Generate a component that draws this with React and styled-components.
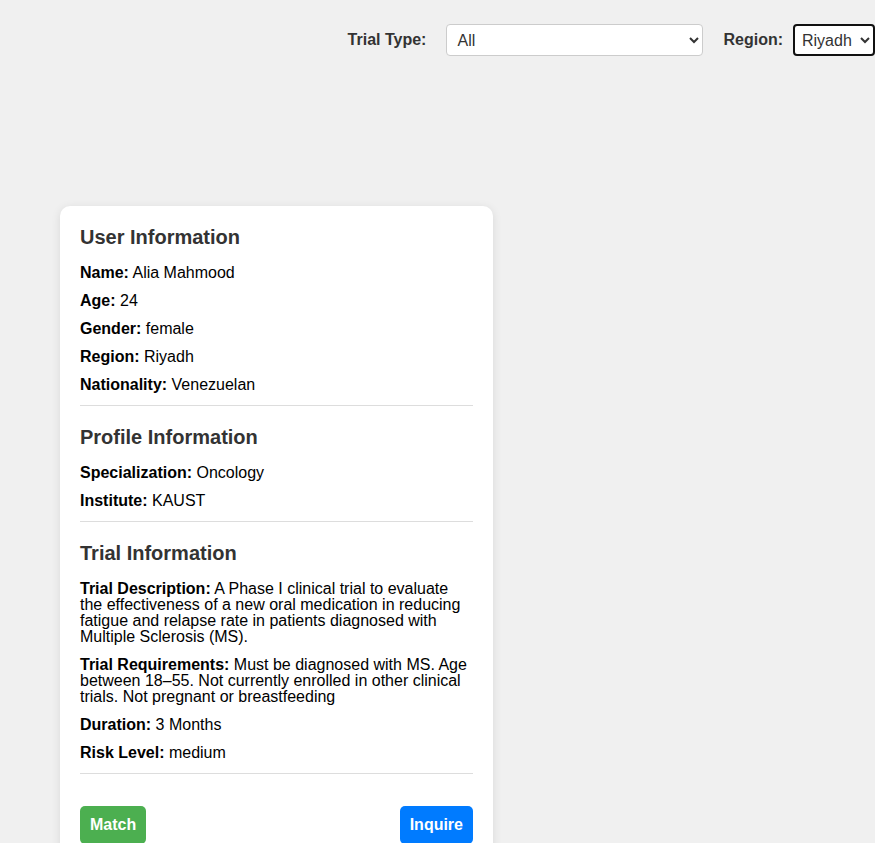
import React from 'react';
import styled, { createGlobalStyle } from 'styled-components';

const GlobalStyle = createGlobalStyle`
    html, body {
        margin: 0;
        padding: 0;
        background-color: #f0f0f0;
        font-family: "Liberation Sans", Arial, sans-serif;
    }
`;

const Page = styled.div`
    min-height: 843px;
    box-sizing: border-box;
    padding-top: 24px;
    overflow: hidden;
`;

const Filters = styled.div`
    display: flex;
    justify-content: flex-end;
    align-items: center;
    gap: 20px;
`;

const FilterGroup = styled.div`
    display: flex;
    align-items: center;
    gap: ${(p) => p.$gap}px;
`;

const Label = styled.label`
    font-size: 16px;
    font-weight: bold;
    color: #333;
`;

const Select = styled.select`
    box-sizing: border-box;
    height: 32px;
    width: ${(p) => (p.$width ? `${p.$width}px` : 'auto')};
    padding: ${(p) => (p.$focused ? '0 2px 0 3px' : '0 6px')};
    font-size: 16px;
    font-family: inherit;
    color: #333;
    background-color: #fff;
    border: ${(p) => (p.$focused ? '2px solid #111' : '1px solid #ccc')};
    border-radius: 4px;
    outline: none;
`;

const Main = styled.main`
    padding: 150px 0 0 60px;
`;

const Card = styled.div`
    box-sizing: border-box;
    width: 433px;
    background-color: #fff;
    border-radius: 10px;
    box-shadow: 0 2px 10px rgba(0, 0, 0, 0.1);
    padding: 20px 20px 40px;
`;

const Section = styled.section`
    display: flex;
    flex-direction: column;
    gap: 12px;
`;

const Heading = styled.h3`
    margin: 0 0 5px;
    font-size: 20px;
    line-height: 22px;
    font-weight: bold;
    color: #333;
`;

const Field = styled.p`
    margin: 0;
    font-size: 16px;
    line-height: 16px;
    color: #000;

    strong {
        font-weight: bold;
    }
`;

const Divider = styled.hr`
    border: none;
    height: 1px;
    background-color: #ddd;
    margin: 12px 0 20px;
`;

const Actions = styled.div`
    display: flex;
    justify-content: space-between;
    margin-top: 32px;
`;

const Button = styled.button`
    border: none;
    border-radius: 5px;
    padding: 10px;
    font-family: inherit;
    font-size: 16px;
    line-height: 18px;
    font-weight: bold;
    color: #fff;
    background-color: ${(p) => p.$color};
    cursor: pointer;
`;

const sections = [
    {
        title: 'User Information',
        fields: [
            ['Name', 'Alia Mahmood'],
            ['Age', '24'],
            ['Gender', 'female'],
            ['Region', 'Riyadh'],
            ['Nationality', 'Venezuelan'],
        ],
    },
    {
        title: 'Profile Information',
        fields: [
            ['Specialization', 'Oncology'],
            ['Institute', 'KAUST'],
        ],
    },
    {
        title: 'Trial Information',
        fields: [
            ['Trial Description', 'A Phase I clinical trial to evaluate the effectiveness of a new oral medication in reducing fatigue and relapse rate in patients diagnosed with Multiple Sclerosis (MS).'],
            ['Trial Requirements', 'Must be diagnosed with MS. Age between 18\u201355. Not currently enrolled in other clinical trials. Not pregnant or breastfeeding'],
            ['Duration', '3 Months'],
            ['Risk Level', 'medium'],
        ],
    },
];

const App = () => {
    return (
        <Page>
            <GlobalStyle />
            <Filters>
                <FilterGroup $gap={20}>
                    <Label htmlFor="trialType">Trial Type:</Label>
                    <Select id="trialType" $width={257} defaultValue="All">
                        <option>All</option>
                        <option>Phase I</option>
                        <option>Phase II</option>
                    </Select>
                </FilterGroup>
                <FilterGroup $gap={10}>
                    <Label htmlFor="region">Region:</Label>
                    <Select id="region" $focused defaultValue="Riyadh">
                        <option>Riyadh</option>
                        <option>Jeddah</option>
                    </Select>
                </FilterGroup>
            </Filters>
            <Main>
                <Card>
                    {sections.map((section) => (
                        <React.Fragment key={section.title}>
                            <Section>
                                <Heading>{section.title}</Heading>
                                {section.fields.map(([label, value]) => (
                                    <Field key={label}>
                                        <strong>{label}:</strong> {value}
                                    </Field>
                                ))}
                            </Section>
                            <Divider />
                        </React.Fragment>
                    ))}
                    <Actions>
                        <Button $color="#4caf50">Match</Button>
                        <Button $color="#007bff">Inquire</Button>
                    </Actions>
                </Card>
            </Main>
        </Page>
    );
};

export default App;
